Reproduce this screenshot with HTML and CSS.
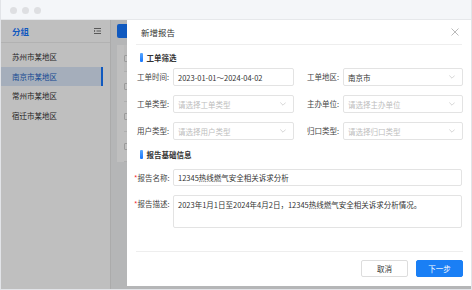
FILE: index.html
```html
<!DOCTYPE html>
<html lang="zh-CN">
<head>
    <meta charset="UTF-8">
    <meta name="viewport" content="width=device-width, initial-scale=1.0">
    <title>新增报告</title>
    <link rel="stylesheet" href="styles.css">
</head>
<body>
<div class="window">
    <div class="titlebar">
        <span class="dot"></span>
        <span class="dot"></span>
        <span class="dot"></span>
    </div>

    <div class="app">
        <aside class="sidebar">
            <div class="side-head">
                <span class="side-title">分组</span>
                <svg class="menu-icon" width="7" height="6" viewBox="0 0 7 6">
                    <path d="M0 0.5H7M2.5 3H7M0 5.5H7" stroke="#666" stroke-width="0.9" fill="none"/>
                    <path d="M0 1.8L1.4 3L0 4.2Z" fill="#666"/>
                </svg>
            </div>
            <ul class="side-list">
                <li>苏州市某地区</li>
                <li class="active">南京市某地区</li>
                <li>常州市某地区</li>
                <li>宿迁市某地区</li>
            </ul>
        </aside>
        <main class="main">
            <div class="toolbar">
                <button class="btn-add" aria-label="新增"></button>
            </div>
            <div class="table">
                <div class="row head"><span class="check"></span></div>
                <div class="row"><span class="check"></span></div>
                <div class="row"><span class="check"></span></div>
                <div class="row"><span class="check"></span></div>
            </div>
        </main>
    </div>

    <div class="mask"></div>

    <section class="drawer">
        <div class="drawer-head">
            <span class="drawer-title">新增报告</span>
            <svg class="close" width="8" height="8" viewBox="0 0 8 8">
                <path d="M0.5 0.5L7.5 7.5M7.5 0.5L0.5 7.5" stroke="#a8a8a8" stroke-width="0.8"/>
            </svg>
        </div>

        <div class="drawer-body">
            <div class="section-title">工单筛选</div>
            <div class="filter-grid">
                <div class="field">
                    <label>工单时间:</label>
                    <div class="input">2023-01-01～2024-04-02</div>
                </div>
                <div class="field">
                    <label>工单地区:</label>
                    <div class="input">南京市<svg class="arrow" width="6" height="4" viewBox="0 0 6 4"><path d="M0.3 0.5L3 3.2L5.7 0.5" stroke="#c4c4c4" stroke-width="0.7" fill="none"/></svg></div>
                </div>
                <div class="field">
                    <label>工单类型:</label>
                    <div class="input placeholder">请选择工单类型<svg class="arrow" width="6" height="4" viewBox="0 0 6 4"><path d="M0.3 0.5L3 3.2L5.7 0.5" stroke="#c4c4c4" stroke-width="0.7" fill="none"/></svg></div>
                </div>
                <div class="field">
                    <label>主办单位:</label>
                    <div class="input placeholder">请选择主办单位<svg class="arrow" width="6" height="4" viewBox="0 0 6 4"><path d="M0.3 0.5L3 3.2L5.7 0.5" stroke="#c4c4c4" stroke-width="0.7" fill="none"/></svg></div>
                </div>
                <div class="field">
                    <label>用户类型:</label>
                    <div class="input placeholder">请选择用户类型<svg class="arrow" width="6" height="4" viewBox="0 0 6 4"><path d="M0.3 0.5L3 3.2L5.7 0.5" stroke="#c4c4c4" stroke-width="0.7" fill="none"/></svg></div>
                </div>
                <div class="field">
                    <label>归口类型:</label>
                    <div class="input placeholder">请选择归口类型<svg class="arrow" width="6" height="4" viewBox="0 0 6 4"><path d="M0.3 0.5L3 3.2L5.7 0.5" stroke="#c4c4c4" stroke-width="0.7" fill="none"/></svg></div>
                </div>
            </div>

            <div class="section-title second">报告基础信息</div>
            <div class="field wide name-row">
                <label><span class="req">*</span>报告名称:</label>
                <div class="input">12345热线燃气安全相关诉求分析</div>
            </div>
            <div class="field wide desc-row">
                <label><span class="req">*</span>报告描述:</label>
                <div class="input textarea">2023年1月1日至2024年4月2日，12345热线燃气安全相关诉求分析情况。</div>
            </div>
        </div>

        <div class="drawer-foot">
            <button class="btn">取消</button>
            <button class="btn primary">下一步</button>
        </div>
    </section>
</div>
</body>
</html>
```

FILE: styles.css
```css
* {
    box-sizing: border-box;
}
body {
    margin: 0;
    font-family: "Noto Sans CJK SC", "Noto Sans", sans-serif;
    color: #333;
    background: #fff;
}
.window {
    position: relative;
    width: 472px;
    height: 290px;
    border: 1px solid #e2e4e8;
    border-top: none;
    overflow: hidden;
}
.titlebar {
    height: 20px;
    background: #f4f6f9;
    border-bottom: 1px solid #e6e8eb;
    display: flex;
    align-items: center;
    gap: 5px;
    padding: 1px 0 0 9px;
}
.dot {
    width: 7px;
    height: 7px;
    border-radius: 50%;
    background: #dedfe2;
}
.app {
    display: flex;
    height: 269px;
}

/* sidebar */
.sidebar {
    width: 110px;
    background: #fff;
    border-right: 1px solid #e4e4e4;
    padding-right: 7px;
}
.side-head {
    height: 23px;
    border-bottom: 1px solid #eee;
    margin-right: -7px;
    display: flex;
    align-items: center;
    justify-content: space-between;
    padding: 0 9px 1px 11px;
}
.side-title {
    font-size: 8.5px;
    font-weight: bold;
    color: #1677ff;
}
.side-list {
    list-style: none;
    margin: 0;
    padding: 4px 0 0;
}
.side-list li {
    height: 19.5px;
    line-height: 19.5px;
    padding-left: 11px;
    font-size: 7.5px;
    color: #333;
}
.side-list li.active {
    background: #dce9fa;
    border-right: 2px solid #1677ff;
    color: #1a5fc4;
}

/* main */
.main {
    flex: 1;
    background: #f2f3f5;
    padding: 4px 0 0 6px;
}
.btn-add {
    display: block;
    height: 14px;
    width: 60px;
    border: none;
    border-radius: 2px;
    background: #1677ff;
    padding: 0;
}
.table {
    margin-top: 7px;
    background: #fff;
    padding-left: 7px;
}
.row {
    height: 30px;
    border-bottom: 1px solid #e8e8e8;
    display: flex;
    align-items: center;
}
.row.head {
    height: 27px;
    background: #fafafa;
}
.check {
    width: 7px;
    height: 7px;
    border: 1px solid #cfcfcf;
    border-radius: 1px;
    background: #fff;
}

/* overlay */
.mask {
    position: absolute;
    top: 20px;
    left: 0;
    right: 0;
    bottom: 0;
    background: rgba(0, 0, 0, 0.25);
}
.drawer {
    position: absolute;
    top: 20px;
    left: 126px;
    right: 0;
    bottom: 3px;
    background: #fff;
    display: flex;
    flex-direction: column;
}
.drawer-head {
    height: 25px;
    margin: 0 9px;
    border-bottom: 1px solid #eee;
    display: flex;
    align-items: center;
    justify-content: space-between;
    padding: 0 3px 0 5px;
}
.drawer-title {
    font-size: 8.5px;
    color: #333;
}
.drawer-body {
    flex: 1;
    padding: 0 9px 0 7px;
}
.section-title {
    margin: 8px 0 0 6px;
    height: 9px;
    display: flex;
    align-items: center;
    gap: 4px;
    font-size: 7.5px;
    font-weight: bold;
    color: #333;
}
.section-title::before {
    content: "";
    width: 2.5px;
    height: 9px;
    border-radius: 1px;
    background: linear-gradient(#5aa8ff, #1677ff);
}
.section-title.second {
    margin-top: 10px;
}
.filter-grid {
    margin-top: 6px;
    display: grid;
    grid-template-columns: 160px 159px;
    column-gap: 10px;
    row-gap: 9px;
}
.field {
    display: flex;
    gap: 4px;
}
.field label {
    width: 35px;
    flex: none;
    text-align: right;
    font-size: 7.5px;
    line-height: 18px;
    color: #444;
    white-space: nowrap;
}
.req {
    color: #f5222d;
}
.input {
    flex: 1;
    height: 18px;
    border: 1px solid #e3e3e3;
    border-radius: 2px;
    padding: 0 7px 0 4px;
    display: flex;
    align-items: center;
    justify-content: space-between;
    font-size: 7.5px;
    color: #333;
    white-space: nowrap;
}
.input.placeholder {
    color: #bdbdbd;
}
.name-row {
    margin-top: 10px;
}
.name-row .input {
    height: 17px;
}
.desc-row {
    margin-top: 8px;
}
.input.textarea {
    height: 33px;
    align-items: flex-start;
    padding-top: 4px;
    line-height: 10px;
}
.drawer-foot {
    margin: 0 8px 0 9px;
    border-top: 1px solid #eee;
    padding: 8px 0 9px;
    display: flex;
    justify-content: flex-end;
    gap: 8px;
}
.btn {
    width: 47px;
    height: 17px;
    border: 1px solid #ddd;
    border-radius: 2px;
    background: #fff;
    font-family: inherit;
    font-size: 7.5px;
    color: #333;
    padding: 0;
}
.btn.primary {
    background: #1a7ff5;
    border-color: #1a7ff5;
    color: #fff;
}
```
